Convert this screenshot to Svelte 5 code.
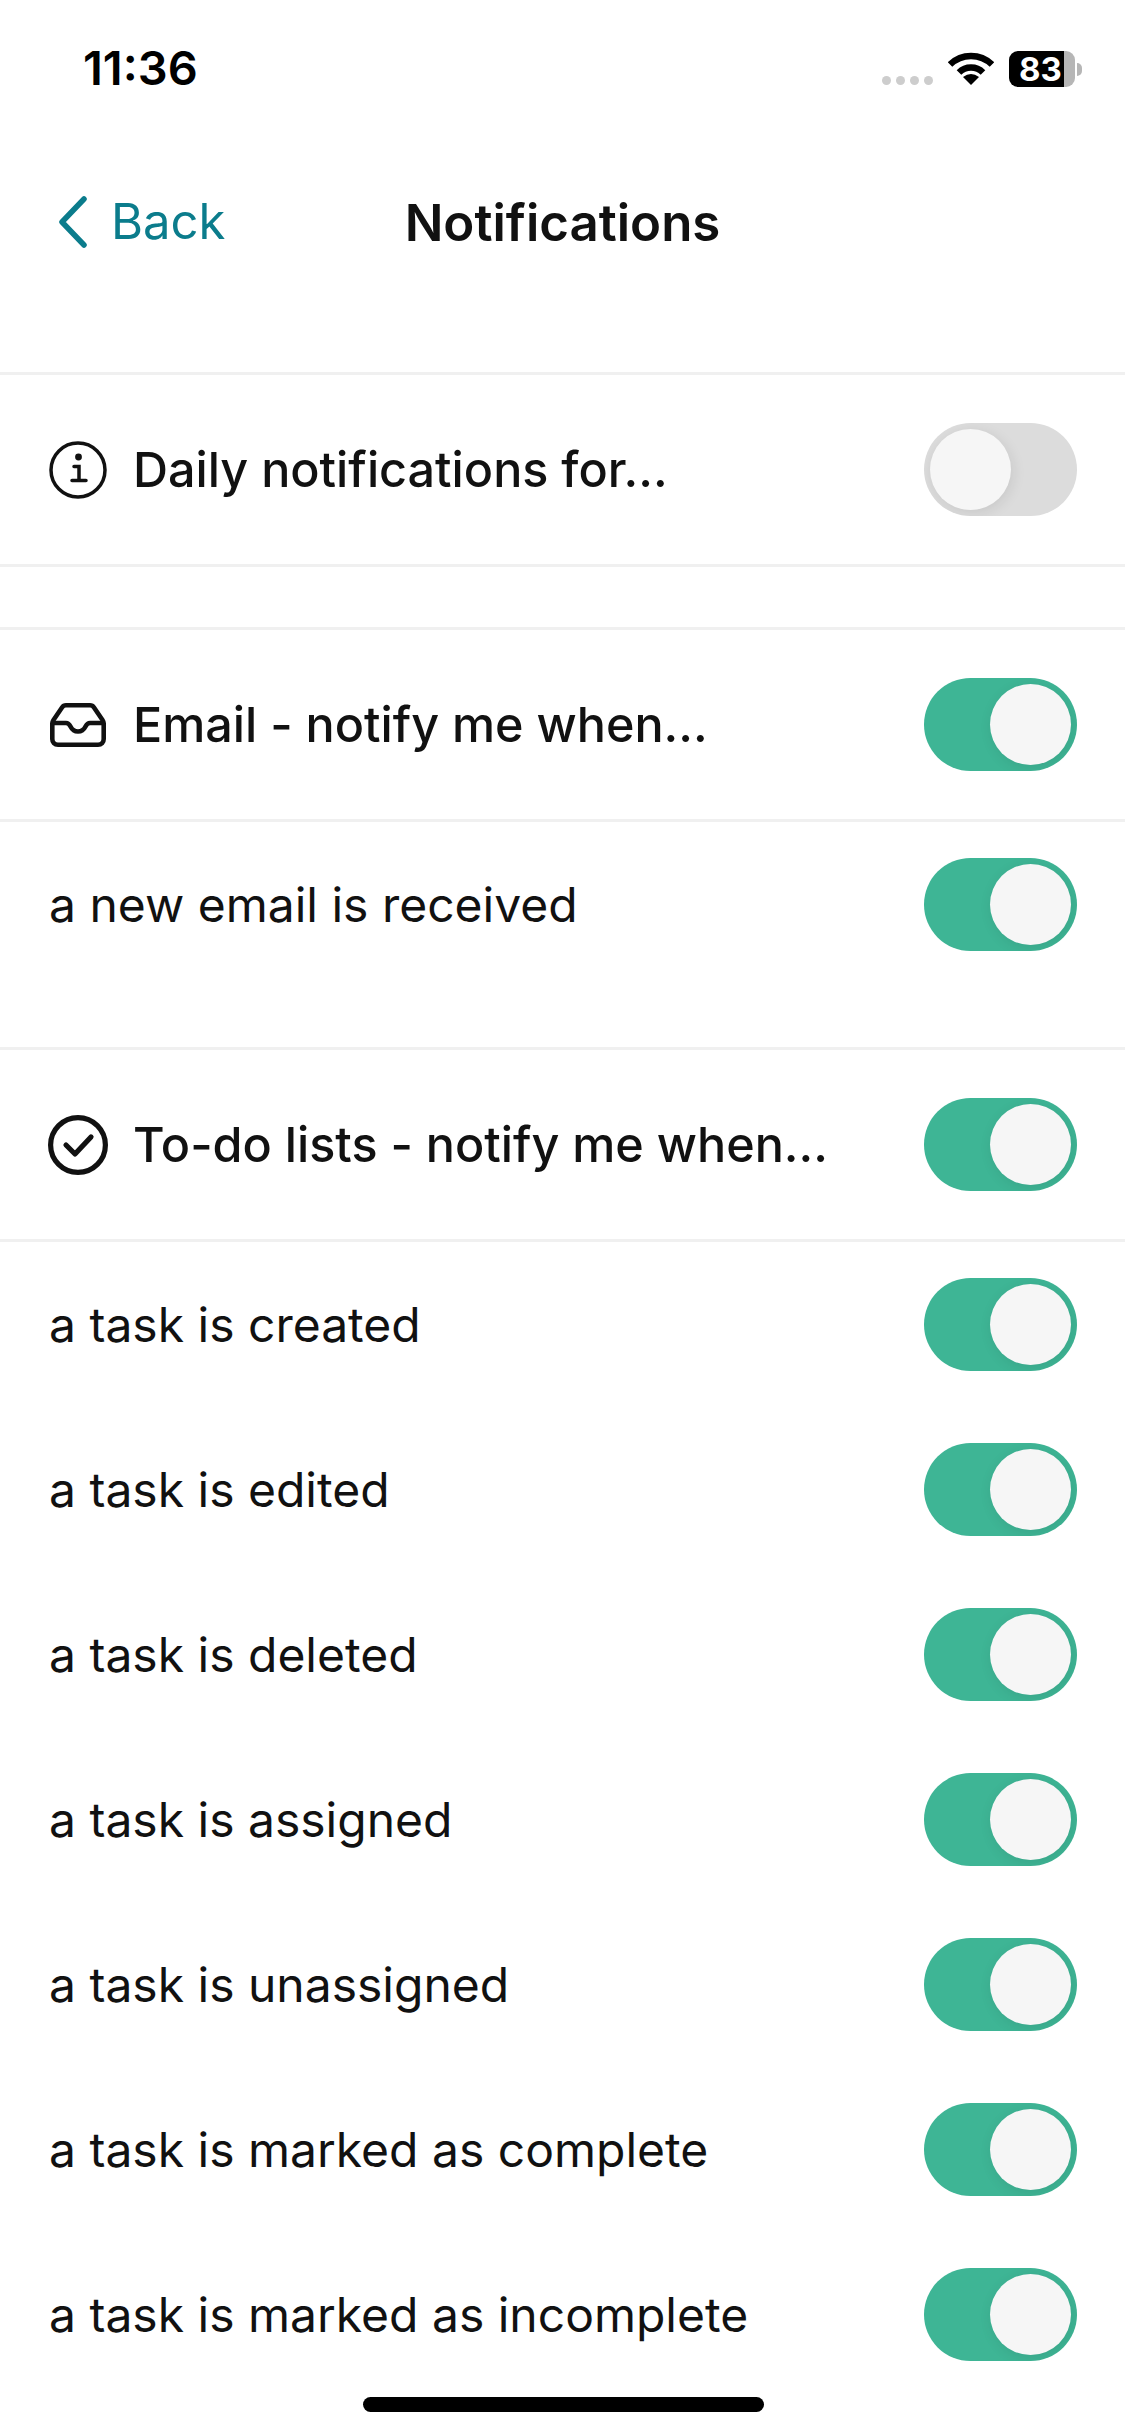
<script>
  const tasks = ['a task is created','a task is edited','a task is deleted','a task is assigned','a task is unassigned','a task is marked as complete','a task is marked as incomplete'];
</script>

{#snippet toggle(on)}
  <span class="switch" class:on role="switch" aria-checked={on}><span class="knob"></span></span>
{/snippet}

<main class="screen">
  <div class="status">
    <span class="time">11:36</span>
    <div class="status-icons">
      <span class="dots"><i></i><i></i><i></i><i></i></span>
      <svg class="wifi" width="46" height="33" viewBox="0 0 46 33" fill="none" stroke="#000" stroke-width="6.5">
        <path d="M2 12.5A30 30 0 0 1 44 12.5"/>
        <path d="M11 20.5A17 17 0 0 1 35 20.5"/>
        <path d="M23 33L15 25Q23 19 31 25Z" fill="#000" stroke="none"/>
      </svg>
      <span class="battery">83</span>
      <span class="nub"></span>
    </div>
  </div>

  <nav class="nav">
    <div class="back">
      <svg width="30" height="52" viewBox="0 0 30 52" fill="none" stroke="#0b7c8c" stroke-width="5.5" stroke-linecap="round" stroke-linejoin="round"><path d="M26 3L4 26L26 49"/></svg>
      <span>Back</span>
    </div>
    <h1>Notifications</h1>
  </nav>

  <section class="group">
    <div class="row head">
      <div class="label">
        <svg class="ico" width="58" height="58" viewBox="0 0 58 58" fill="none" stroke="#111" stroke-width="3.5" stroke-linecap="round">
          <circle cx="29" cy="29" r="27"/>
          <path d="M25 25.5H30V39.5M23 39.5H37"/>
          <circle cx="29.5" cy="16" r="3.4" fill="#111" stroke="none"/>
        </svg>
        <span>Daily notifications for...</span>
      </div>
      {@render toggle(false)}
    </div>
  </section>

  <section class="group second">
    <div class="row head">
      <div class="label">
        <svg class="ico inbox" width="56" height="44" viewBox="0 0 56 44" fill="none" stroke="#111" stroke-width="4.6" stroke-linecap="round" stroke-linejoin="round">
          <path d="M16 2.3H40C42 2.3 43 3 44 4.5L52.5 17C53.3 18.2 53.7 19 53.7 20.5V36C53.7 39.5 51.5 41.7 48 41.7H8C4.5 41.7 2.3 39.5 2.3 36V20.5C2.3 19 2.7 18.2 3.5 17L12 4.5C13 3 14 2.3 16 2.3Z"/>
          <path d="M3 20H16C18.5 20 19.5 21.5 20.5 23.5C22 26.5 24.5 28.5 28 28.5S34 26.5 35.5 23.5C36.5 21.5 37.5 20 40 20H53"/>
        </svg>
        <span>Email - notify me when...</span>
      </div>
      {@render toggle(true)}
    </div>
    <div class="row sub">
      <span>a new email is received</span>
      {@render toggle(true)}
    </div>
  </section>

  <section class="group third">
    <div class="row head">
      <div class="label">
        <svg class="ico check" width="60" height="60" viewBox="0 0 60 60" fill="none" stroke="#111" stroke-width="5.2" stroke-linecap="round" stroke-linejoin="round">
          <circle cx="30" cy="30" r="27.4"/>
          <path d="M18 30L27 39L43 22"/>
        </svg>
        <span>To-do lists - notify me when...</span>
      </div>
      {@render toggle(true)}
    </div>
    {#each tasks as task}
      <div class="row sub">
        <span>{task}</span>
        {@render toggle(true)}
      </div>
    {/each}
  </section>

  <div class="home"></div>
</main>

<style>
  :global(body) { margin: 0; background: #fff; }
  .screen {
    position: relative;
    width: 1125px;
    height: 2436px;
    overflow: hidden;
    background: #fff;
    color: #111;
    font-family: Inter, "Liberation Sans", sans-serif;
  }
  .status {
    height: 138px;
    box-sizing: border-box;
    padding: 44px 43px 0 83px;
    display: flex;
    justify-content: space-between;
    align-items: flex-start;
  }
  .time {
    font-size: 47px;
    line-height: 48px;
    font-weight: 600;
    color: #000;
  }
  .status-icons {
    display: flex;
    align-items: flex-start;
    margin-top: 7px;
  }
  .dots { display: flex; gap: 5px; margin: 25px 15px 0 0; }
  .dots i { width: 9px; height: 9px; border-radius: 50%; background: #cdcdcd; }
  .wifi { margin: 1px 15px 0 0; }
  .battery {
    display: block;
    width: 66px;
    height: 36px;
    box-sizing: border-box;
    padding-left: 10px;
    border-radius: 9px;
    background: linear-gradient(90deg, #000 55px, #b6b6b6 55px);
    color: #fff;
    font-size: 33px;
    line-height: 36px;
    font-weight: 700;
  }
  .nub {
    width: 5px;
    height: 13px;
    margin: 12px 0 0 2px;
    background: #b6b6b6;
    border-radius: 0 7px 7px 0;
  }
  .nav {
    position: relative;
    height: 234px;
    display: flex;
    align-items: flex-start;
    justify-content: center;
  }
  .nav h1 {
    margin: 0;
    padding-top: 55px;
    font-size: 51px;
    line-height: 60px;
    font-weight: 600;
    color: #111;
  }
  .back {
    position: absolute;
    left: 58px;
    top: 58px;
    display: flex;
    align-items: center;
    gap: 23px;
    color: #0b7c8c;
    font-size: 49px;
    line-height: 52px;
  }
  .group { border-top: 3px solid #f0f0f0; }
  .second { margin-top: 60px; }
  .third { margin-top: 60px; }
  .group:first-of-type { border-bottom: 3px solid #f0f0f0; }
  .row {
    display: flex;
    align-items: center;
    justify-content: space-between;
    padding-left: 49px;
    padding-right: 48px;
  }
  .head {
    height: 189px;
    font-size: 48.5px;
    font-weight: 500;
    border-bottom: 3px solid #f0f0f0;
  }
  .group:first-of-type .head { border-bottom: 0; }
  .sub { height: 165px; font-size: 48px; }
  .label { display: flex; align-items: center; gap: 26px; }
  .inbox { margin-left: 1px; margin-right: 1px; }
  .check { margin-left: -1px; margin-right: -1px; }
  .ico { flex: none; }
  .switch {
    position: relative;
    flex: none;
    display: block;
    width: 153px;
    height: 93px;
    border-radius: 47px;
    overflow: hidden;
    background: #dcdcdc;
  }
  .switch.on { background: #3eb595; }
  .knob {
    position: absolute;
    top: 6px;
    left: 6px;
    width: 81px;
    height: 81px;
    border-radius: 50%;
    background: #f6f6f6;
    box-shadow: 2px 3px 14px rgba(0, 0, 0, 0.09);
  }
  .on .knob { left: 66px; }
  .home {
    position: absolute;
    left: 363px;
    top: 2397px;
    width: 401px;
    height: 15px;
    border-radius: 8px;
    background: #000;
  }
</style>
